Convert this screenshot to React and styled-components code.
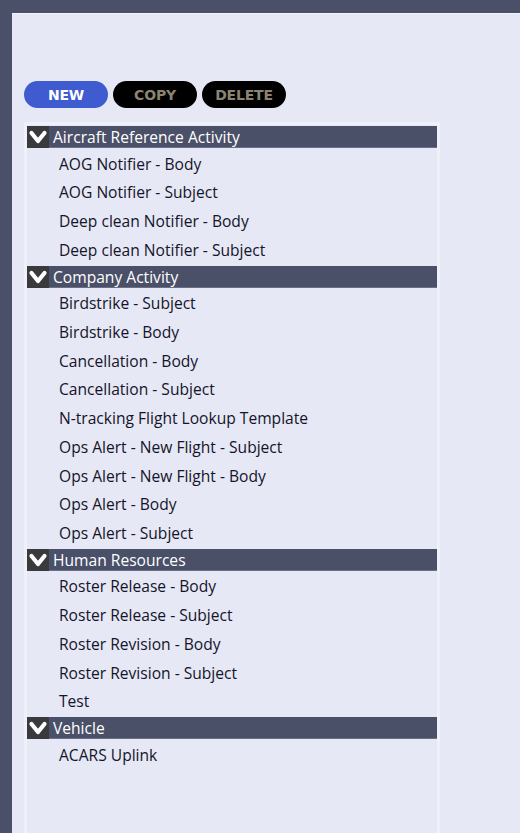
import React from "react";
import styled, { createGlobalStyle } from "styled-components";

const GlobalStyle = createGlobalStyle`
  html, body {
    margin: 0;
    padding: 0;
    background: #4a5068;
    height: 100%;
    overflow: hidden;
  }
  #root {
    height: 100%;
  }
`;

const Page = styled.div`
  box-sizing: border-box;
  height: 833px;
  padding: 13px 0 0 12px;
  background: #4a5068;
`;

const Panel = styled.div`
  box-sizing: border-box;
  height: 100%;
  background: #e6e8f5;
  border-top: 1px solid #f4f5fb;
  padding: 67px 0 0 12px;
  display: flex;
  flex-direction: column;
`;

const Toolbar = styled.div`
  display: flex;
  gap: 5px;
  margin-bottom: 14px;
`;

const Button = styled.button`
  width: 84px;
  height: 27px;
  border: none;
  border-radius: 14px;
  padding: 0;
  font-family: Tahoma, "DejaVu Sans", sans-serif;
  font-weight: bold;
  font-size: 14px;
  letter-spacing: -0.2px;
  background: ${(p) => (p.primary ? "#3e5bcf" : "#000")};
  color: ${(p) => (p.primary ? "#ffffff" : "#8c8470")};
  cursor: pointer;
`;

const ListBox = styled.div`
  box-sizing: border-box;
  width: 416px;
  flex: 1;
  background: #e6e8f5;
  border: 3px solid #eff1fa;
  border-bottom: none;
  padding-top: 1px;
  font-family: "Open Sans", "Noto Sans", sans-serif;
  font-size: 15.6px;
`;

const Header = styled.div`
  display: flex;
  align-items: center;
  height: 22px;
  margin-bottom: 2.5px;
  background: #4a5068;
  color: #ffffff;
  box-shadow: inset 0 -1px 0 #6b7088;
`;

const Chevron = styled.div`
  width: 22px;
  height: 22px;
  background: #3a3a3c;
  display: flex;
  align-items: center;
  justify-content: center;
  margin-right: 4px;
`;

const Item = styled.div`
  height: 28.75px;
  line-height: 27.5px;
  padding-left: 32px;
  color: #14142a;
  white-space: nowrap;
`;

const groups = [
  {
    name: "Aircraft Reference Activity",
    items: [
      "AOG Notifier - Body",
      "AOG Notifier - Subject",
      "Deep clean Notifier - Body",
      "Deep clean Notifier - Subject",
    ],
  },
  {
    name: "Company Activity",
    items: [
      "Birdstrike - Subject",
      "Birdstrike - Body",
      "Cancellation - Body",
      "Cancellation - Subject",
      "N-tracking Flight Lookup Template",
      "Ops Alert - New Flight - Subject",
      "Ops Alert - New Flight - Body",
      "Ops Alert - Body",
      "Ops Alert - Subject",
    ],
  },
  {
    name: "Human Resources",
    items: [
      "Roster Release - Body",
      "Roster Release - Subject",
      "Roster Revision - Body",
      "Roster Revision - Subject",
      "Test",
    ],
  },
  {
    name: "Vehicle",
    items: ["ACARS Uplink"],
  },
];

const ChevronIcon = () => (
  <svg width="20" height="16" viewBox="0 0 20 16">
    <path
      d="M3.5 4 L10 12 L16.5 4"
      fill="none"
      stroke="#fff"
      strokeWidth="4.2"
      strokeLinecap="round"
      strokeLinejoin="round"
    />
  </svg>
);

export default function App() {
  return (
    <Page>
      <GlobalStyle />
      <Panel>
        <Toolbar>
          <Button primary>NEW</Button>
          <Button>COPY</Button>
          <Button>DELETE</Button>
        </Toolbar>
        <ListBox>
          {groups.map((group) => (
            <React.Fragment key={group.name}>
              <Header>
                <Chevron>
                  <ChevronIcon />
                </Chevron>
                {group.name}
              </Header>
              {group.items.map((item) => (
                <Item key={item}>{item}</Item>
              ))}
            </React.Fragment>
          ))}
        </ListBox>
      </Panel>
    </Page>
  );
}
